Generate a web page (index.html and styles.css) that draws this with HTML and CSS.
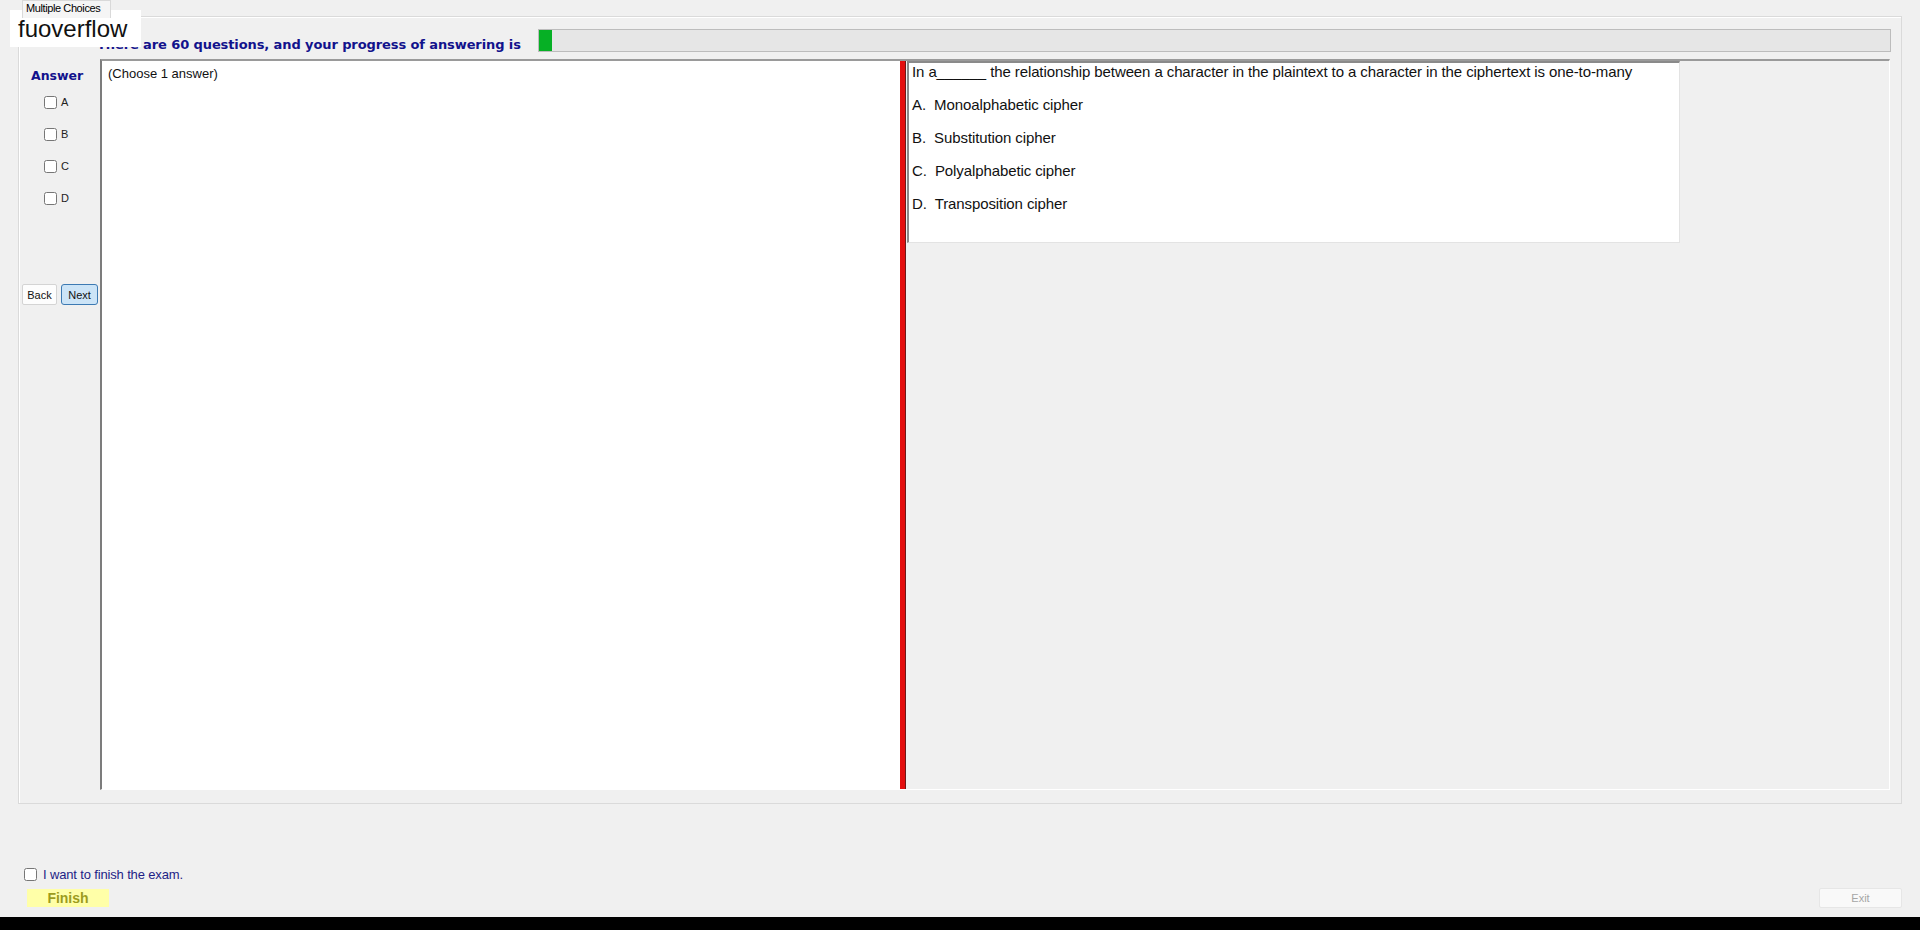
FILE: index.html
```html
<!DOCTYPE html>
<html lang="en">
<head>
    <meta charset="UTF-8">
    <meta name="viewport" content="width=device-width, initial-scale=1.0">
    <title>Multiple Choices</title>
    <link rel="stylesheet" href="styles.css">
</head>
<body>
    <div class="watermark">fuoverflow</div>

    <div class="tabs">
        <div class="tab">Multiple Choices</div>
    </div>

    <div class="tab-page">
        <div class="top-row">
            <div class="progress-label">There are 60 questions, and your progress of answering is</div>
            <div class="progress">
                <div class="progress-fill" style="width: 13px"></div>
            </div>
        </div>

        <div class="work-row">
            <div class="answer-col">
                <div class="answer-title">Answer</div>
                <label class="opt"><input type="checkbox"><span>A</span></label>
                <label class="opt"><input type="checkbox"><span>B</span></label>
                <label class="opt"><input type="checkbox"><span>C</span></label>
                <label class="opt"><input type="checkbox"><span>D</span></label>
                <div class="nav-buttons">
                    <button class="btn">Back</button>
                    <button class="btn btn-focus">Next</button>
                </div>
            </div>

            <div class="split">
                <div class="pane-left">(Choose 1 answer)</div>
                <div class="splitter"></div>
                <div class="pane-right">
                    <div class="question-box">
                        <p>In a______ the relationship between a character in the plaintext to a character in the ciphertext is one-to-many</p>
                        <p>A.&nbsp; Monoalphabetic cipher</p>
                        <p>B.&nbsp; Substitution cipher</p>
                        <p>C.&nbsp; Polyalphabetic cipher</p>
                        <p>D.&nbsp; Transposition cipher</p>
                    </div>
                </div>
            </div>
        </div>
    </div>

    <div class="footer">
        <div class="finish-box">
            <label class="finish-check"><input type="checkbox"><span>I want to finish the exam.</span></label>
            <button class="finish-btn">Finish</button>
        </div>
        <button class="exit-btn" disabled>Exit</button>
    </div>

    <div class="taskbar"></div>
</body>
</html>
```

FILE: styles.css
```css
html, body {
    margin: 0;
    padding: 0;
}
body {
    width: 1920px;
    height: 930px;
    overflow: hidden;
    background-color: #f0f0f0;
    font-family: "Liberation Sans", Arial, sans-serif;
    display: flex;
    flex-direction: column;
    position: relative;
}
input[type="checkbox"] {
    width: 13px;
    height: 13px;
    margin: 0;
}

/* label pasted on top of the window */
.watermark {
    position: absolute;
    left: 10px;
    top: 10px;
    width: 123px;
    height: 37px;
    padding-left: 8px;
    background: white;
    font-size: 24px;
    line-height: 37px;
    color: #111;
}

.tabs {
    height: 16px;
    padding-left: 22px;
    display: flex;
}
.tab {
    width: 84px;
    height: 17px;
    border: 1px solid #d9d9d9;
    border-bottom: none;
    background: #f5f5f5;
    font-size: 11px;
    letter-spacing: -0.4px;
    line-height: 15px;
    padding-left: 3px;
    color: #000;
    position: relative;
    z-index: 1;
}

.tab-page {
    height: 788px;
    margin: 0 18px;
    border: 1px solid #dadada;
    box-shadow: inset 1px 1px 0 #fff;
    box-sizing: border-box;
    display: flex;
    flex-direction: column;
}

.top-row {
    height: 42px;
    display: flex;
    padding-left: 78px;
    padding-right: 10px;
}
.progress-label {
    width: 441px;
    margin-top: 20px;
    font-family: "DejaVu Sans", Verdana, sans-serif;
    font-weight: bold;
    font-size: 13px;
    letter-spacing: -0.1px;
    line-height: 16px;
    color: #12128c;
    white-space: nowrap;
}
.progress {
    flex: 1;
    height: 23px;
    margin-top: 12px;
    box-sizing: border-box;
    border: 1px solid #bcbcbc;
    background: #e6e6e6;
}
.progress-fill {
    height: 100%;
    background: #06b025;
}

.work-row {
    height: 731px;
    display: flex;
}
.answer-col {
    width: 81px;
    padding-top: 9px;
}
.answer-title {
    padding-left: 12px;
    font-family: "DejaVu Sans", Verdana, sans-serif;
    font-weight: bold;
    font-size: 12.5px;
    line-height: 15px;
    color: #12128c;
    margin-bottom: 3px;
}
.opt {
    display: flex;
    align-items: center;
    height: 32px;
    padding-left: 25px;
    font-size: 11px;
    color: #222;
}
.opt span {
    margin-left: 4px;
}
.nav-buttons {
    display: flex;
    gap: 4px;
    padding-left: 3px;
    margin-top: 70px;
}
.btn {
    height: 21px;
    padding: 0;
    font-family: "Liberation Sans", Arial, sans-serif;
    font-size: 11px;
    color: #111;
    background: #fdfdfd;
    border: 1px solid #d4d4d4;
    border-radius: 2px;
    width: 35px;
}
.btn-focus {
    width: 37px;
    background: #cce4f7;
    border-color: #3d7ab3;
    border-radius: 3px;
}

.split {
    flex: 1;
    margin-right: 11px;
    display: flex;
    border-top: 2px solid #9a9a9a;
    border-left: 2px solid #7c7c7c;
    border-right: 1px solid #fff;
    border-bottom: 1px solid #fff;
}
.pane-left {
    width: 792px;
    background: white;
    padding: 5px 0 0 6px;
    font-size: 13px;
    line-height: 15px;
    color: #111;
}
.splitter {
    width: 5px;
    background: #e40f0f;
    border-right: 1px solid #6d1a1a;
}
.pane-right {
    flex: 1;
    padding: 0 0 0 1px;
}
.question-box {
    width: 773px;
    height: 182px;
    box-sizing: border-box;
    background: white;
    border-top: 2px solid #8a8a8a;
    border-left: 2px solid #8a8a8a;
    border-right: 1px solid #e3e3e3;
    border-bottom: 1px solid #e3e3e3;
    padding: 0 0 0 3px;
    font-size: 15px;
    letter-spacing: -0.1px;
    line-height: 17px;
    color: #111;
}
.question-box p {
    margin: 0 0 16px;
    white-space: nowrap;
}

.footer {
    height: 113px;
    display: flex;
    justify-content: space-between;
    align-items: flex-end;
    padding: 0 18px 0 24px;
    box-sizing: border-box;
}
.finish-box {
    padding-bottom: 10px;
}
.finish-check {
    display: flex;
    align-items: center;
    height: 13px;
    font-size: 13px;
    letter-spacing: -0.15px;
    color: #1e1e86;
}
.finish-check span {
    margin-left: 6px;
}
.finish-btn {
    display: block;
    margin: 8px 0 0 3px;
    width: 82px;
    height: 18px;
    padding: 0;
    border: none;
    background: #ffffa8;
    font-family: "Liberation Sans", Arial, sans-serif;
    font-weight: bold;
    font-size: 14px;
    color: #9c9c1e;
}
.exit-btn {
    width: 83px;
    height: 20px;
    margin-bottom: 9px;
    padding: 0;
    background: #f9f9f9;
    border: 1px solid #e6e6e6;
    border-radius: 2px;
    font-family: "Liberation Sans", Arial, sans-serif;
    font-size: 11px;
    color: #a6a6a6;
}

.taskbar {
    height: 13px;
    background: #000;
}
```
